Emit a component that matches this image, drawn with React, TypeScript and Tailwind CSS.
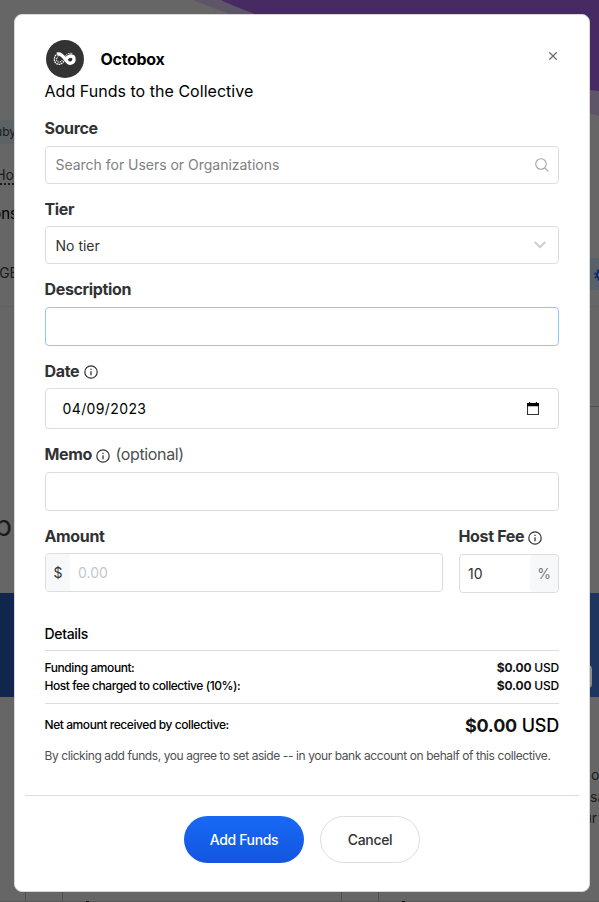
import React from "react";

const inputBox = "flex items-center rounded-[4px] border border-[#dcdde0] bg-white";
const labelText = "-ml-[0.5px] flex h-6 items-center whitespace-nowrap text-[16px] font-bold leading-6 tracking-[-0.35px] text-[#313233]";

function InfoIcon({ className = "" }: { className?: string }) {
  return (
    <svg className={`h-[14px] w-[14px] shrink-0 ${className}`} viewBox="0 0 14 14" fill="none" stroke="#313233">
      <circle cx="7" cy="7" r="6.2" strokeWidth="1.2" />
      <path d="M7 6.2v4" strokeWidth="1.3" />
      <path d="M7 3.7v1.3" strokeWidth="1.3" />
    </svg>
  );
}

function Logo() {
  return (
    <svg className="ml-px h-[38px] w-[38px]" viewBox="0 0 38 38">
      <circle cx="19" cy="19" r="19" fill="#333333" />
      <g fill="none" stroke="#fff">
        <path
          d="M11 14.2C14.3 13 16.5 15.3 19 18.8C21.2 22.2 23 24 25.4 23C29 21.6 28.8 16.2 25.2 16C22.2 15.9 20.4 18.2 18.6 20.6"
          strokeWidth="3.4"
        />
        <path d="M19 16.4C20.8 13.8 23.5 12.8 26.2 13.5" strokeWidth="0.9" strokeDasharray="1.2 0.6" />
        <path d="M18 21C16.3 23.8 13 25.3 10.3 23.5C7.5 21.5 7.7 16.3 11 14.2" strokeWidth="1.3" strokeDasharray="1.8 0.6" />
        <path d="M16.5 20C14.8 22.4 12.2 22.8 11 21.2C10 19.8 10.4 17.5 12.3 16.6" strokeWidth="1" strokeDasharray="1.5 0.6" />
      </g>
      <ellipse cx="24.6" cy="19.4" rx="1.6" ry="0.8" fill="#333333" />
    </svg>
  );
}

/* Dimmed collective page that shows around the edges of the dialog. */
function Backdrop() {
  return (
    <div className="absolute inset-0 text-[#1a1a1a]">
      <svg className="absolute inset-0" width="599" height="902" viewBox="0 0 599 902">
        <path d="M193 0L250 22L599 116V0Z" fill="#5f5568" />
        <path d="M221 0C238 8 250 12 262 17L500 80L599 91V0Z" fill="#482a62" />
      </svg>
      <div className="absolute left-0 top-[120px] h-6 w-4 bg-[#5c6364]" />
      <span className="absolute right-[583px] top-[123px] text-[12px] leading-[18px]">ruby</span>
      <span className="absolute right-[585px] top-[166px] border-b-2 border-dotted border-[#1a1a1a] text-[14px] leading-[17px]">Ho</span>
      <span className="absolute right-[581px] top-[204px] text-[15px] leading-5 text-black">ons</span>
      <span className="absolute right-[581px] top-[263px] text-[14px] leading-5">GE</span>
      <div className="absolute left-0 top-[306px] h-px w-full bg-[#606060]" />
      <span className="absolute right-[587px] top-[508px] text-[29px] leading-9">p</span>
      <div className="absolute left-[589px] top-[258px] h-8 w-[10px] bg-[#566168]" />
      <svg className="absolute left-[594px] top-[269px]" width="12" height="12" viewBox="0 0 12 12" fill="none" stroke="#0d2d70">
        <circle cx="6" cy="6" r="3.2" strokeWidth="2" />
        <circle cx="6" cy="6" r="4.8" strokeWidth="2" strokeDasharray="2 1.77" />
      </svg>
      <div className="absolute left-[589px] top-[406px] h-px w-[10px] bg-[#505050]" />
      <div className="absolute left-0 top-[593px] h-[104px] w-full bg-gradient-to-r from-[#10264d] to-[#1d355f]" />
      <div className="absolute left-[580px] top-[665px] h-[23px] w-3 rounded-[4px] border-2 border-[#8a8a8a] bg-[#666]" />
      <span className="absolute left-[591px] top-[765px] text-[14px] leading-5">on</span>
      <span className="absolute left-[590px] top-[787px] text-[14px] leading-5">sa</span>
      <span className="absolute right-[2px] top-[808px] text-[14px] leading-5">ur</span>
      <div className="absolute left-[25px] top-[880px] h-[22px] w-[38px] border-x border-[#505050]" />
      <div className="absolute left-[341px] top-[880px] h-[22px] w-[38px] border-x border-[#505050]" />
      <div className="absolute left-0 top-[901px] h-px w-full bg-[#595959]" />
      <div className="absolute left-[86px] top-[901px] h-px w-[3px] bg-[#111]" />
      <div className="absolute left-[402px] top-[901px] h-px w-[3px] bg-[#111]" />
    </div>
  );
}

function Money({ className = "" }: { className?: string }) {
  return (
    <span className={`tracking-[-0.2px] ${className}`}>
      <b className="font-bold text-[#141415]">$0.00</b> USD
    </span>
  );
}

export default function App() {
  return (
    <div className="relative h-[902px] w-[599px] overflow-hidden bg-[#666666] font-['Inter',sans-serif]">
      <Backdrop />
      <div className="absolute left-[14px] top-[14px] flex h-[878px] w-[576px] flex-col rounded-[8px] border border-[#d8d8da] bg-white px-[30px] pt-[25px] text-black">
        <div className="flex h-[38px] items-center">
          <Logo />
          <h1 className="ml-[16.5px] text-[16px] font-bold leading-6 tracking-[-0.3px]">Octobox</h1>
          <svg className="mb-[6px] ml-auto mr-[2px] h-[8px] w-[8px]" viewBox="0 0 8 8" stroke="#6b6c70" strokeWidth="1.3">
            <path d="M0.3 0.3l7.4 7.4M7.7 0.3L0.3 7.7" />
          </svg>
        </div>
        <p className="-ml-[0.5px] mt-px h-6 whitespace-nowrap text-[16px] leading-6 tracking-[0.03px]">Add Funds to the Collective</p>

        <div className={`${labelText} mt-[13px]`}>Source</div>
        <div className={`${inputBox} mt-[6px] h-[38px] justify-between pl-[9.5px] pr-[9px] text-[14px] text-[#808080]`}>
          <span className="mb-[2px] tracking-[-0.02px]">Search for Users or Organizations</span>
          <svg className="mb-px h-[14px] w-[14px]" viewBox="0 0 14 14" fill="none" stroke="#a6a6a6" strokeWidth="1.1">
            <circle cx="6" cy="6" r="5.3" />
            <path d="M9.8 9.8l3.6 3.6" />
          </svg>
        </div>

        <div className={`${labelText} mt-[13px]`}>Tier</div>
        <div className={`${inputBox} mt-[5px] h-[38px] justify-between pl-[9.5px] pr-[12px] text-[14px] text-[#313233]`}>
          <span>No tier</span>
          <svg className="h-[8px] w-[12px]" viewBox="0 0 12 8" fill="none" stroke="#cccccc" strokeWidth="2">
            <path d="M0.8 1l5.2 5.2L11.2 1" />
          </svg>
        </div>

        <div className={`${labelText} mt-[13px]`}>Description</div>
        <div className="mt-[6px] h-[39px] rounded-[4px] border border-[#8fc7f9] bg-white" />

        <div className={`${labelText} mt-[13px]`}>
          Date <InfoIcon className="ml-[5px] mt-[2px]" />
        </div>
        <div className={`${inputBox} mt-[5px] h-[41px] justify-between pl-[16.5px] pr-[19px] text-[14px]`}>
          <span className="tracking-[0.38px]">04/09/2023</span>
          <svg className="h-[13px] w-[12px]" viewBox="0 0 12 13" fill="none">
            <path d="M0.5 1.5h11v11h-11z" stroke="#333" strokeWidth="1.1" />
            <path d="M0 1h12v3.3H0zM2 0h1.2v1.5H2zM8.8 0H10v1.5H8.8z" fill="#000" />
          </svg>
        </div>

        <div className={`${labelText} mt-[13px]`}>
          Memo <InfoIcon className="ml-[4px] mt-[4px]" />
          <span className="ml-[5.5px] font-normal text-[#4e5052]">(optional)</span>
        </div>
        <div className={`${inputBox} mt-[6px] h-[39px]`} />

        <div className="mt-[13px] flex gap-4">
          <div className="w-[398px]">
            <div className={labelText}>Amount</div>
            <div className={`${inputBox} mt-[5px] h-[39px] overflow-hidden text-[14px]`}>
              <span className="flex h-full w-[24px] items-center justify-center bg-[#f7f8fa] text-[#313233]">$</span>
              <span className="ml-[8px] text-[#c4c7cc]">0.00</span>
            </div>
          </div>
          <div className="w-[100px]">
            <div className={labelText}>
              Host Fee <InfoIcon className="ml-[4px] mt-[4px]" />
            </div>
            <div className={`${inputBox} mt-[6px] h-[39px] overflow-hidden text-[14px]`}>
              <span className="ml-[8px] flex-1 text-[#313233]">10</span>
              <span className="flex h-full w-[28px] items-center justify-center rounded-[4px] bg-[#f7f8fa] text-[#76777a]">%</span>
            </div>
          </div>
        </div>

        <div className="mt-[31px] h-[27px] border-b border-[#dcdde0] text-[14px] font-medium leading-5 tracking-[-0.32px]">
          <span className="-ml-[0.5px]">Details</span>
        </div>
        <div className="mt-[8px] flex h-[18px] items-center justify-between text-[12px] font-medium leading-[18px] tracking-[-0.43px]">
          <span className="-ml-[0.5px]">Funding amount:</span>
          <Money />
        </div>
        <div className="flex h-[18px] items-center justify-between text-[12px] font-medium leading-[18px] tracking-[-0.43px]">
          <span className="-ml-[0.5px]">Host fee charged to collective (10%):</span>
          <Money />
        </div>
        <div className="mt-[8px] flex h-[44px] shrink-0 items-center justify-between border-t border-[#dcdde0] text-[12px] font-medium tracking-[-0.42px]">
          <span className="-ml-[0.5px] mb-[2px]">Net amount received by collective:</span>
          <Money className="text-[18px]" />
        </div>
        <p className="-ml-[0.5px] h-[18px] whitespace-nowrap text-[12px] leading-[18px] tracking-[-0.415px] text-[#4e5052]">
          By clicking add funds, you agree to set aside -- in your bank account on behalf of this collective.
        </p>

        <div className="-mx-[20px] mt-[30px] flex justify-center gap-4 border-t border-[#dcdde0] pt-5">
          <button className="h-[47px] w-[120px] rounded-full bg-gradient-to-b from-[#1869f5] to-[#1355e0] text-[14px] font-medium tracking-[-0.35px] text-white">
            Add Funds
          </button>
          <button className="h-[47px] w-[100px] rounded-full border border-[#dcdde0] bg-white text-[14px] font-medium tracking-[-0.35px] text-[#313233]">
            Cancel
          </button>
        </div>
      </div>
    </div>
  );
}
